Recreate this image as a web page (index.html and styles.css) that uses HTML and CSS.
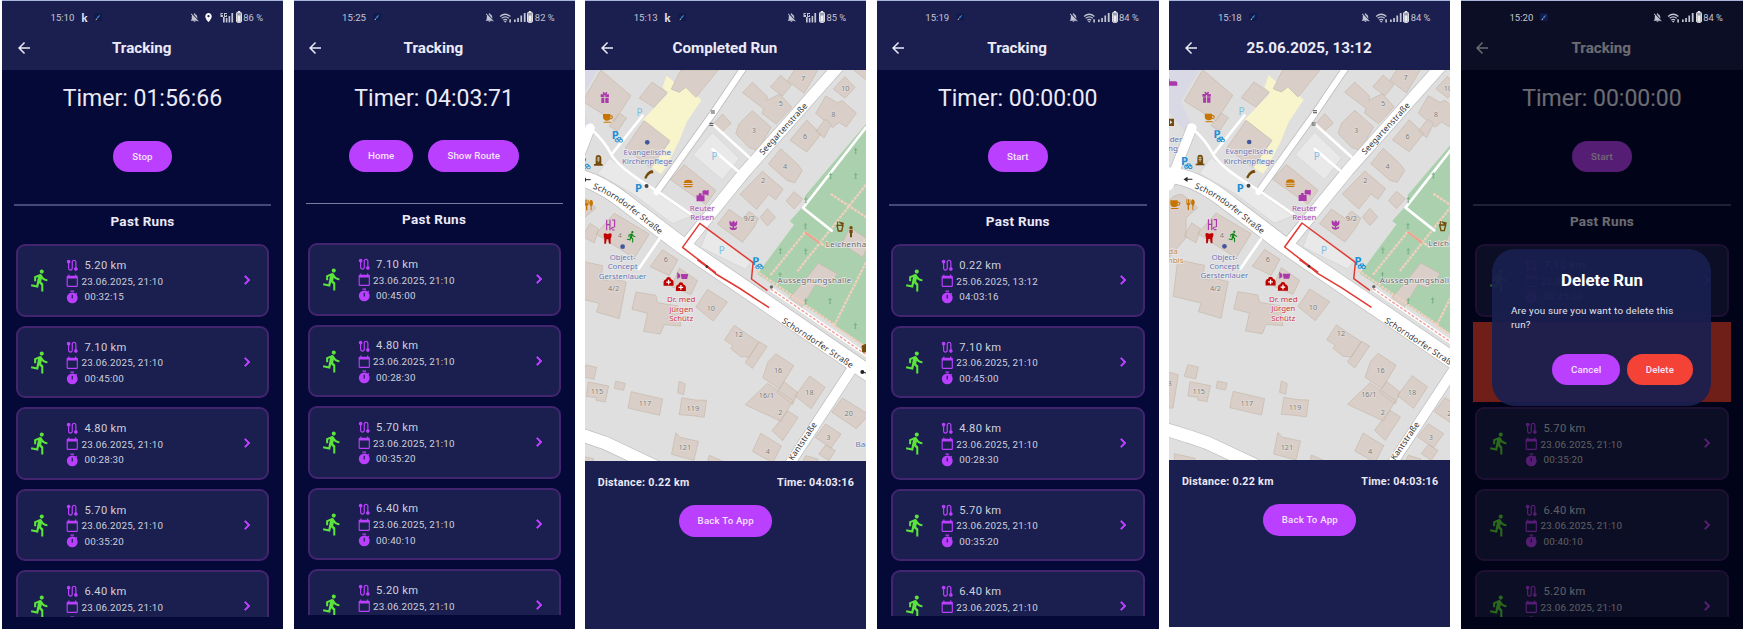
FILE: index.html
```html
<!DOCTYPE html>
<html lang="en">
<head>
<meta charset="utf-8">
<title>Run Tracking</title>
<link rel="stylesheet" href="styles.css">
</head>
<body>
<svg class="defs" aria-hidden="true">
<defs>
<symbol id="run" viewBox="0 0 24 24"><path d="M13.49 5.48c1.1 0 2-.9 2-2s-.9-2-2-2-2 .9-2 2 .9 2 2 2zm-3.6 13.9l1-4.4 2.1 2v6h2v-7.5l-2.1-2 .6-3c1.3 1.5 3.3 2.5 5.5 2.5v-2c-1.9 0-3.5-1-4.3-2.4l-1-1.6c-.4-.6-1-1-1.7-1-.3 0-.5.1-.8.1l-5.2 2.2v4.7h2v-3.4l1.8-.7-1.6 8.1-4.9-1-.4 2 7 1.4z"/></symbol>
<symbol id="route" viewBox="0 0 24 24"><path d="M19 15.18V7c0-2.21-1.79-4-4-4s-4 1.79-4 4v10c0 1.1-.9 2-2 2s-2-.9-2-2V8.82C8.16 8.4 9 7.3 9 6c0-1.66-1.34-3-3-3S3 4.34 3 6c0 1.3.84 2.4 2 2.82V17c0 2.21 1.79 4 4 4s4-1.79 4-4V7c0-1.1.9-2 2-2s2 .9 2 2v8.18c-1.16.41-2 1.51-2 2.82 0 1.66 1.34 3 3 3s3-1.34 3-3c0-1.3-.84-2.4-2-2.82z"/></symbol>
<symbol id="cal" viewBox="0 0 24 24"><path d="M20 3h-1V1h-2v2H7V1H5v2H4c-1.1 0-2 .9-2 2v16c0 1.1.9 2 2 2h16c1.1 0 2-.9 2-2V5c0-1.1-.9-2-2-2zm0 18H4V8h16v13z"/></symbol>
<symbol id="watch" viewBox="0 0 24 24"><path d="M15 1H9v2h6V1zm4.03 6.39l1.42-1.42c-.43-.51-.9-.99-1.41-1.41l-1.42 1.42A8.96 8.96 0 0 0 12 4a9 9 0 1 0 9 9c0-2.12-.74-4.07-1.97-5.61zM13 14h-2V8h2v6z"/></symbol>
<symbol id="chev" viewBox="0 0 24 24"><path d="M10 6 8.59 7.41 13.17 12l-4.58 4.59L10 18l6-6z" stroke="currentColor"/></symbol>
<symbol id="back" viewBox="0 0 24 24"><path d="M20 11H7.83l5.59-5.59L12 4l-8 8 8 8 1.41-1.41L7.83 13H20v-2z"/></symbol>
<symbol id="mute" viewBox="0 0 24 24"><path d="M20 18.69L7.84 6.14 5.27 3.49 4 4.76l2.8 2.8v.01c-.52.99-.8 2.16-.8 3.42v5l-2 2v1h13.73l2 2L21 19.72l-1-1.03zM12 22c1.11 0 2-.89 2-2h-4c0 1.11.89 2 2 2zm6-7.32V11c0-3.08-1.64-5.64-4.5-6.32V4c0-.83-.67-1.5-1.5-1.5s-1.5.67-1.5 1.5v.68c-.15.03-.29.08-.42.12z"/></symbol>
<symbol id="pin" viewBox="0 0 24 24"><path d="M12 2C8.13 2 5 5.13 5 9c0 5.25 7 13 7 13s7-7.75 7-13c0-3.87-3.13-7-7-7zm0 9.5a2.5 2.5 0 1 1 0-5 2.5 2.5 0 0 1 0 5z"/></symbol>
<symbol id="wifi" viewBox="0 0 24 20"><path d="M2 8Q11.500 0 21 8M5 11.500Q11.500 6 18 11.500M8 15Q11.500 12 15 15" fill="none" stroke="currentColor" stroke-width="2.300"/><path d="M11.500 19.500 9 16.500h5zM19 13h3v6h-3z"/></symbol>
<symbol id="signal" viewBox="0 0 12 10"><path d="M0 7.500h1.700V10H0zM3.200 6h1.700v4H3.200zM6.400 3.500h1.700V10H6.400zM9.800 1h1.800v9H9.800z"/></symbol>
<symbol id="cell" viewBox="0 0 15 11"><path d="M4 5h1.700v5.500H4zM6.800 6h1.600v4.500H6.800zM9.600 4h1.600v6.500H9.600zM12.400 1h1.700v9.500h-1.700zM1.500 1h2.400v1H2.500v1h1.500v2H1.500zM5 1h3v1H6v2h1V3h1v2H5z"/></symbol>
<symbol id="batt" viewBox="0 0 6 12"><path d="M2 0h2v1H2z"/><rect x=".6" y="1.300" width="4.800" height="10" rx="1" fill="#9b9dae" stroke="currentColor"/><path d="M1.600 4.500h2.800v6H1.600z"/></symbol>
<symbol id="app" viewBox="0 0 10 10"><rect width="10" height="10" rx="2" fill="#101b4b"/><path d="M2 8.500 5 4l3-2-2 3.500z" fill="#3f7fd0"/><path d="M2.500 7 4 8.500 2 9z" fill="#d9c58a"/></symbol>
<symbol id="bikepark" viewBox="0 0 36 36"><text x="0" y="24" class="p-bold">P</text><path d="M11 29a5 5 0 1 0 10 0 5 5 0 1 0-10 0M23 30a5 5 0 1 0 10 0 5 5 0 1 0-10 0M16 29l3-8h8l2 8" fill="none" stroke="#1a8fd6" stroke-width="3"/></symbol>
<symbol id="cup" viewBox="0 0 34 30"><path d="M2 2h22v4q9-1 8 6t-9 6q-2 4-7 4h-6Q2 20 2 12zM24 9v6q5 0 5-3t-5-3zM4 25h22v3H4z" fill="#c77400"/></symbol>
<symbol id="cross" viewBox="0 0 14 20"><path d="M7 1v17M2 7h10M4 18h6" stroke="#79b184" stroke-width="3" fill="none"/></symbol>
<symbol id="medic" viewBox="0 0 36 32"><path d="M2 30V17q2-7 8-8 1-7 8-7t8 7q6 1 8 8v13z" fill="#bf0000"/><path d="M18 11v15M10.500 18.500h15" stroke="#fff" stroke-width="4"/></symbol>

<g id="town">
<rect x="-40" y="20" width="910" height="1190" fill="#dfdfdf"/>
<path d="M861 190 678 405l5 20-51 57 13 10-110 148 326 218z" fill="#aad0ae"/>
<path d="M-40 20H60L0 122l32 75-20 20-52-70z" fill="#d9d9e6"/>
<path d="M262 45l28 23-12 20 22 7 22-17 45 40-45 67-22 55-40 80-15 20-30-20 57-75-82-67 75-78-15-20z" fill="#f8f5cd"/>
<path d="M400 215l80 78-50 65-88-75zM385 508l135 92-22 26-133-66zM90 292l145 105 100 70-55 22-120-90-105-60z" fill="#e9e9e9" stroke="#d3d3d3" stroke-width="2"/>
<g class="bld">
<path d="M65 28 155 105 105 182 10 122zM218 65l46 30-40 45-44-28zM305 28h112l-67 82-30-30-20 15-24-10zM195 180l77 60-57 82-77-60zM120 158l22 14-27 40-25-16z"/>
<path d="M520 65l45 43-3 12 40-20 36 40-47 50-42-32 5-14-64-48zM605 44l32 30-27 32-36-27zM650 22h70l-45 76-50-38zM797 48l31 32-30 33-35-28zM815 20h60v50zM740 106l35 20 15-6 42 37-30 42-22-14-20 16-50-43z"/>
<path d="M683 178l43 42-43 54-50-35zM738 176l18 14-21 42-24-20zM520 150l56 50-40 70-26-9-40-42 10-30zM430 160l26 28-26 24-27-22zM605 264l50 46 15 20-23 36-22-6-57-50zM550 332l62 53-22 32-22-16-36 45-49-45zM645 393l26 22-26 30-24-24zM450 446l40 28 20-22 28 22-14 27-34 44-75-55zM565 444l24 26-24 26-22-26zM315 312l95 78-30 42-106-75z"/>
<path d="M105 458l105 62-45 72-115-72zM-36 420q30-30 50-10l36 32-35 30v60l-51 60zM32 488l26 17-13 42-36-20zM250 567l46 30-26 48-57-27zM-10 598l80 17-5 40 20 5v-10l56 14-21 110-68-20 8-26-83-20z"/>
<path d="M385 686l60 38-43 57-52-42zM170 694l60 10 5 22 60 10 10 60-50-4-12 28-50-8 12-54-47-12zM300 622l55 38-20 42-58-24zM465 794l74 50-28 46-26-2-30-24 6-10-25-16zM540 843l24 14-44 66-22-18zM590 879l54 36-43 70-50-34 16-48zM565 968l77 52-36 62-108-50zM615 963l40 32-14 36-48-36zM625 1050l32 20-46 70-32-30zM692 946l46 34-42 64-48-38zM790 1012l80 50-38 42-74-50zM740 1090l46 30-30 42-48-32zM740 1153l29 17-20 30-30-20zM545 1118l62 38-26 50-61-34z"/>
<path d="M-40 935l32 8-16 100h-16zM20 913l32 7-8 36-34-8zM27 964l61 12-10 48-28-5 1-8-30-4zM109 962l29 6-5 21-28-6zM156 993l94 22-9 49-95-22zM300 962l18 8-5 32-18-6zM308 1011l40 7 34 1-7 51-34-5-41-3zM290 1116l12 14 56 12-14 57-67-18zM390 1184l46 20h-50zM-20 1180l62 14v20h-62zM680 1185l36 10v20h-50z"/>
<path d="M718 608l58 32-37 42-30-10-42 70-39-26 50-58zM812 500l60 40-20 50-62-40z"/>
</g>
<g fill="none" stroke="#f2d0bd" stroke-width="7" stroke-dasharray="9 3">
<path d="M861 372 655 632M755 400l115 75M678 515l70 48M678 515l-105 130M861 605 765 795M530 630l240 165M765 795l96 65"/></g>
<g fill="none" stroke="#bdbdbd" stroke-linejoin="round">
<path d="M-40 345Q40 345 150 434L300 548 385 607 880 945" stroke-width="52"/><path d="M780 15 500 330 325 545" stroke-width="38"/><path d="M498 15 400 160 232 395" stroke-width="23"/><path d="M-36 375 32 203" stroke-width="33"/><path d="M822 920 625 1220" stroke-width="33"/><path d="M-45 1107 22 1128 80 1148 250 1228" stroke-width="42"/></g>
<g fill="none" stroke="#fff" stroke-linejoin="round" stroke-linecap="round">
<path d="M-40 345Q40 345 150 434L300 548 385 607 880 945" stroke-width="48"/><path d="M780 15 500 330 325 545" stroke-width="34"/><path d="M498 15 400 160 232 395" stroke-width="18"/><path d="M-36 375 32 203" stroke-width="29"/><path d="M822 920 625 1220" stroke-width="29"/><path d="M-45 1107 22 1128 80 1148 250 1228" stroke-width="38"/>
<path d="M35 205Q75 240 95 280T235 392L345 468M190 165 98 280M400 190 510 290M400 266 475 330M240 535 178 625M861 200 672 442 758 510" stroke-width="8"/></g>
<path d="M575 685 880 895" stroke="#fff" stroke-width="12"/><path d="M575 685 880 895" stroke="#f29a97" stroke-width="4" stroke-dasharray="9 5"/>
<path d="M678 515 722 547" stroke="#f0a08c" stroke-width="6"/>
<g><use href="#cross" x="823" y="260" width="14" height="20"/><use href="#cross" x="748" y="335" width="14" height="20"/><use href="#cross" x="823" y="335" width="14" height="20"/><use href="#cross" x="673" y="408" width="14" height="20"/><use href="#cross" x="672" y="486" width="14" height="20"/><use href="#cross" x="597" y="560" width="14" height="20"/><use href="#cross" x="673" y="562" width="14" height="20"/><use href="#cross" x="596" y="634" width="14" height="20"/><use href="#cross" x="673" y="712" width="14" height="20"/><use href="#cross" x="746" y="710" width="14" height="20"/><use href="#cross" x="822" y="785" width="14" height="20"/></g>

<g class="num">
<text x="672" y="60">7</text><text x="799" y="91">10</text><text x="605" y="137">5</text><text x="763" y="170">8</text><text x="524" y="218">3</text><text x="678" y="235">6</text><text x="618" y="325">4</text><text x="552" y="368">2</text><text x="510" y="482">9/2</text><text x="122" y="532">4</text><text x="260" y="604">6</text><text x="103" y="691">4/2</text><text x="395" y="750">10</text><text x="479" y="828">12</text><text x="597" y="938">16</text><text x="691" y="1004">18</text><text x="562" y="1011">16/1</text><text x="604" y="1063">2</text><text x="809" y="1067">20</text><text x="748" y="1138">3</text><text x="566" y="1181">4</text><text x="53" y="1001">115</text><text x="197" y="1037">117</text><text x="341" y="1050">119</text><text x="317" y="1168">121</text><text x="-34" y="976">3</text>
</g>
<g class="lbl blue"><text x="204" y="282" textLength="142">Evangelische</text><text x="204" y="310" textLength="152">Kirchenpflege</text><text x="130" y="599" textLength="78">Object-</text><text x="130" y="626" textLength="90">Concept</text><text x="130" y="654" textLength="143">Gerstenlauer</text><text x="-18" y="246">ider</text><text x="-24" y="273">ng</text><text x="850" y="1160">Bac</text></g>
<g class="lbl violet"><text x="369" y="451" textLength="74">Reuter</text><text x="369" y="479" textLength="72">Reisen</text></g>
<g class="lbl red"><text x="306" y="725" textLength="86">Dr. med</text><text x="306" y="753" textLength="72">Jürgen</text><text x="306" y="781" textLength="72">Schütz</text></g>
<g class="lbl orange"><text x="-24" y="582">da</text><text x="-20" y="609">mbis</text></g>
<g class="lbl grey"><text x="706" y="668" textLength="222">Aussegnungshalle</text><text x="801" y="558" textLength="121">Leichenha</text></g>
<g class="street"><text textLength="200" transform="translate(613 205) rotate(-47.500)" y="8">Seegartenstraße</text>
<path id="bend" d="M38 382Q95 405 142 442T250 528" fill="none" stroke="none"/>
<text class="start"><textPath href="#bend" startOffset="2" textLength="246">Schorndorfer Straße</textPath></text>
<text textLength="250" transform="translate(716 847) rotate(33.500)" y="8">Schorndorfer Straße</text>
<text textLength="132" transform="translate(671 1142) rotate(-56)" y="8">Kantstraße</text></g>

<g class="p-thin"><text x="172" y="165">P</text><text x="397" y="299">P</text><text x="419" y="580">P</text></g>
<text x="167" y="395" class="p-bold">P</text>
<use href="#bikepark" x="97" y="210" width="36" height="36"/><use href="#bikepark" x="0" y="290" width="36" height="36"/><use href="#bikepark" x="519" y="590" width="36" height="36"/>
<use href="#cup" x="69" y="158" width="34" height="30"/><use href="#cup" x="-34" y="418" width="34" height="30"/>
<path d="M16 417v12q0 5 4 6v14h4v-14q4-1 4-6v-12h-2v11h-2v-11h-3v11h-2v-11zM34 449v-13q-4-3-4-10t5-9q6 2 6 9t-4 10v13z" fill="#c77400"/>
<path d="M64 101h9q-6-7 0-7 3 0 4 5 1-5 4-5 6 0 0 7h8v8H78v-5h-3v5H64zM66 111h9v16h-9zM78 111h10v16H78z" fill="#ac39ac"/>
<path d="M-38 56h4v7h18q5 0 5 5v8h-27z" fill="#ac39ac"/>
<path d="M-37 175h16v22h-16zM-33 180v12l7-6z" fill="#734a08"/>
<path d="M49 310V292q0-9 8-9t9 9v18h4v5H44v-5z" fill="#734a08"/><path d="M52 292h10M52 298h10M57 288v17" stroke="#dfdfdf" stroke-width="2"/>
<path d="M196 349q-2 5 4 5 5-1 4-6 7-9 13-10 4 1 6-3l-4-7q-15 3-23 21z" fill="#734a08"/>
<path d="M314 367q0-10 13-10t13 10zM313 370h28v3h-28zM314 376h26q0 4-4 4h-18q-4 0-4-4z" fill="#c77400"/>
<path d="M352 404h7v-6h8v6h9v18h-24z" fill="#ac39ac"/><path d="M371 391q2-3 8-1 5 2 8-1v12q-4 2-8 0-5-1-8 1zM386 389v17" fill="#ac39ac" stroke="#ac39ac" stroke-width="2"/>
<path d="M451 480q7 2 7 7 2-6 5-7 4 2 5 7 2-5 6-7v9q0 7-9 8v6l9-5q0 10-12 10-11 0-11-10l9 5v-6q-9-1-9-8z" fill="#ac39ac"/>
<path d="M82 477v32M92 477v32M82 492h10M98 478h8v22M96 506q0-6 8-6M98 508h8" fill="none" stroke="#ac39ac" stroke-width="3.500"/>
<path d="M73 522q0-4 5-4 7 4 14 0 5 0 5 4 0 7-3 11v16h-5l-2-13h-5l-2 13h-5v-16q-2-4-2-11z" fill="#bf0000"/>
<svg class="gym" x="138" y="509" width="38" height="38"><use href="#run"/></svg>
<circle cx="204" cy="245" r="7" fill="#42569c"/><circle cx="130" cy="558" r="7" fill="#42569c"/>
<use href="#medic" x="251" y="647" width="34" height="30"/><use href="#medic" x="288" y="663" width="34" height="30"/>
<path d="M294 634l9 8v8l-9 5zM305 640h22l-3 15h-17z" fill="#ac39ac"/>
<g stroke="#444" stroke-width="3"><path d="M395 151h12M395 157h12M391 188h12M391 194h12"/></g>
<circle cx="202" cy="376" r="6" fill="#444"/><circle cx="577" cy="679" r="5" fill="#666"/>
<path d="M10 357h24M10 357l8-5v10zM861 937l-15-4" stroke="#222" stroke-width="3"/><circle cx="850" cy="934" r="6" fill="#222"/>
<path d="M774 494h18l-4 17h-10z" fill="none" stroke="#734a08" stroke-width="4"/><path d="M780 484l14 4-5 6M776 482v12M849 856l14-6v24h-12z" fill="#734a08" stroke="#734a08" stroke-width="3"/><circle cx="816" cy="501" r="5" fill="#734a08"/><path d="M811 507h10v10h-2v13h-6v-13h-2z" fill="#734a08"/>
<path d="M570 741 480 682 410 640 385 618 310 560 362 488 522 606 517 655 565 690" fill="none" stroke="#e03a35" stroke-width="4.500" stroke-linejoin="round"/><path d="M355 597 410 637" stroke="#e03a35" stroke-width="6"/><circle cx="383" cy="618" r="4" fill="#333"/>
</g>
</defs>
</svg>

<main class="board">

<section class="phone">
<div class="status"><span class="clock">15:10</span><b class="k">k</b><svg class="app"><use href="#app"/></svg><span class="sys"><svg class="mute"><use href="#mute"/></svg><svg class="pin"><use href="#pin"/></svg><svg class="cell"><use href="#cell"/></svg><svg class="batt"><use href="#batt"/></svg>86 %</span></div>
<header class="bar"><svg class="back"><use href="#back"/></svg><h1>Tracking</h1></header>
<div class="body">
<p class="timer">Timer: 01:56:66</p>
<div class="actions"><button class="btn wide">Stop</button></div>
<h2>Past Runs</h2>
<ul class="runs">
<li><svg class="runner"><use href="#run"/></svg><div class="facts"><p class="km"><svg><use href="#route"/></svg>5.20 km</p><p class="date"><svg><use href="#cal"/></svg>23.06.2025, 21:10</p><p><svg><use href="#watch"/></svg>00:32:15</p></div><svg class="chev"><use href="#chev"/></svg></li>
<li><svg class="runner"><use href="#run"/></svg><div class="facts"><p class="km"><svg><use href="#route"/></svg>7.10 km</p><p class="date"><svg><use href="#cal"/></svg>23.06.2025, 21:10</p><p><svg><use href="#watch"/></svg>00:45:00</p></div><svg class="chev"><use href="#chev"/></svg></li>
<li><svg class="runner"><use href="#run"/></svg><div class="facts"><p class="km"><svg><use href="#route"/></svg>4.80 km</p><p class="date"><svg><use href="#cal"/></svg>23.06.2025, 21:10</p><p><svg><use href="#watch"/></svg>00:28:30</p></div><svg class="chev"><use href="#chev"/></svg></li>
<li><svg class="runner"><use href="#run"/></svg><div class="facts"><p class="km"><svg><use href="#route"/></svg>5.70 km</p><p class="date"><svg><use href="#cal"/></svg>23.06.2025, 21:10</p><p><svg><use href="#watch"/></svg>00:35:20</p></div><svg class="chev"><use href="#chev"/></svg></li>
<li><svg class="runner"><use href="#run"/></svg><div class="facts"><p class="km"><svg><use href="#route"/></svg>6.40 km</p><p class="date"><svg><use href="#cal"/></svg>23.06.2025, 21:10</p><p><svg><use href="#watch"/></svg></p></div><svg class="chev"><use href="#chev"/></svg></li>
</ul>
</div>
</section>

<section class="phone tight">
<div class="status"><span class="clock">15:25</span><svg class="app"><use href="#app"/></svg><span class="sys"><svg class="mute"><use href="#mute"/></svg><svg class="wifi"><use href="#wifi"/></svg><svg class="signal"><use href="#signal"/></svg><svg class="batt"><use href="#batt"/></svg>82 %</span></div>
<header class="bar"><svg class="back"><use href="#back"/></svg><h1>Tracking</h1></header>
<div class="body">
<p class="timer">Timer: 04:03:71</p>
<div class="actions"><button class="btn">Home</button><button class="btn">Show Route</button></div>
<h2>Past Runs</h2>
<ul class="runs">
<li><svg class="runner"><use href="#run"/></svg><div class="facts"><p class="km"><svg><use href="#route"/></svg>7.10 km</p><p class="date"><svg><use href="#cal"/></svg>23.06.2025, 21:10</p><p><svg><use href="#watch"/></svg>00:45:00</p></div><svg class="chev"><use href="#chev"/></svg></li>
<li><svg class="runner"><use href="#run"/></svg><div class="facts"><p class="km"><svg><use href="#route"/></svg>4.80 km</p><p class="date"><svg><use href="#cal"/></svg>23.06.2025, 21:10</p><p><svg><use href="#watch"/></svg>00:28:30</p></div><svg class="chev"><use href="#chev"/></svg></li>
<li><svg class="runner"><use href="#run"/></svg><div class="facts"><p class="km"><svg><use href="#route"/></svg>5.70 km</p><p class="date"><svg><use href="#cal"/></svg>23.06.2025, 21:10</p><p><svg><use href="#watch"/></svg>00:35:20</p></div><svg class="chev"><use href="#chev"/></svg></li>
<li><svg class="runner"><use href="#run"/></svg><div class="facts"><p class="km"><svg><use href="#route"/></svg>6.40 km</p><p class="date"><svg><use href="#cal"/></svg>23.06.2025, 21:10</p><p><svg><use href="#watch"/></svg>00:40:10</p></div><svg class="chev"><use href="#chev"/></svg></li>
<li><svg class="runner"><use href="#run"/></svg><div class="facts"><p class="km"><svg><use href="#route"/></svg>5.20 km</p><p class="date"><svg><use href="#cal"/></svg>23.06.2025, 21:10</p><p><svg><use href="#watch"/></svg></p></div><svg class="chev"><use href="#chev"/></svg></li>
</ul>
</div>
</section>

<section class="phone result">
<div class="status"><span class="clock">15:13</span><b class="k">k</b><svg class="app"><use href="#app"/></svg><span class="sys"><svg class="mute"><use href="#mute"/></svg><svg class="cell"><use href="#cell"/></svg><svg class="batt"><use href="#batt"/></svg>85 %</span></div>
<header class="bar"><svg class="back"><use href="#back"/></svg><h1>Completed Run</h1></header>
<svg class="map" viewBox="17 28 844 1173" preserveAspectRatio="none"><use href="#town"/></svg>
<div class="totals"><span>Distance: 0.22 km</span><span>Time: 04:03:16</span></div>
<button class="btn">Back To App</button>
</section>

<section class="phone">
<div class="status"><span class="clock">15:19</span><svg class="app"><use href="#app"/></svg><span class="sys"><svg class="mute"><use href="#mute"/></svg><svg class="wifi"><use href="#wifi"/></svg><svg class="signal"><use href="#signal"/></svg><svg class="batt"><use href="#batt"/></svg>84 %</span></div>
<header class="bar"><svg class="back"><use href="#back"/></svg><h1>Tracking</h1></header>
<div class="body">
<p class="timer">Timer: 00:00:00</p>
<div class="actions"><button class="btn wide">Start</button></div>
<h2>Past Runs</h2>
<ul class="runs short">
<li><svg class="runner"><use href="#run"/></svg><div class="facts"><p class="km"><svg><use href="#route"/></svg>0.22 km</p><p class="date"><svg><use href="#cal"/></svg>25.06.2025, 13:12</p><p><svg><use href="#watch"/></svg>04:03:16</p></div><svg class="chev"><use href="#chev"/></svg></li>
<li><svg class="runner"><use href="#run"/></svg><div class="facts"><p class="km"><svg><use href="#route"/></svg>7.10 km</p><p class="date"><svg><use href="#cal"/></svg>23.06.2025, 21:10</p><p><svg><use href="#watch"/></svg>00:45:00</p></div><svg class="chev"><use href="#chev"/></svg></li>
<li><svg class="runner"><use href="#run"/></svg><div class="facts"><p class="km"><svg><use href="#route"/></svg>4.80 km</p><p class="date"><svg><use href="#cal"/></svg>23.06.2025, 21:10</p><p><svg><use href="#watch"/></svg>00:28:30</p></div><svg class="chev"><use href="#chev"/></svg></li>
<li><svg class="runner"><use href="#run"/></svg><div class="facts"><p class="km"><svg><use href="#route"/></svg>5.70 km</p><p class="date"><svg><use href="#cal"/></svg>23.06.2025, 21:10</p><p><svg><use href="#watch"/></svg>00:35:20</p></div><svg class="chev"><use href="#chev"/></svg></li>
<li><svg class="runner"><use href="#run"/></svg><div class="facts"><p class="km"><svg><use href="#route"/></svg>6.40 km</p><p class="date"><svg><use href="#cal"/></svg>23.06.2025, 21:10</p><p><svg><use href="#watch"/></svg></p></div><svg class="chev"><use href="#chev"/></svg></li>
</ul>
</div>
</section>

<section class="phone result past">
<div class="status"><span class="clock">15:18</span><svg class="app"><use href="#app"/></svg><span class="sys"><svg class="mute"><use href="#mute"/></svg><svg class="wifi"><use href="#wifi"/></svg><svg class="signal"><use href="#signal"/></svg><svg class="batt"><use href="#batt"/></svg>84 %</span></div>
<header class="bar"><svg class="back"><use href="#back"/></svg><h1>25.06.2025, 13:12</h1></header>
<svg class="map" viewBox="-36 29 841 1170" preserveAspectRatio="none"><use href="#town"/></svg>
<div class="totals"><span>Distance: 0.22 km</span><span>Time: 04:03:16</span></div>
<button class="btn">Back To App</button>
</section>

<section class="phone">
<div class="status above"><span class="clock">15:20</span><svg class="app"><use href="#app"/></svg><span class="sys"><svg class="mute"><use href="#mute"/></svg><svg class="wifi"><use href="#wifi"/></svg><svg class="signal"><use href="#signal"/></svg><svg class="batt"><use href="#batt"/></svg>84 %</span></div>
<header class="bar"><svg class="back"><use href="#back"/></svg><h1>Tracking</h1></header>
<div class="body">
<p class="timer">Timer: 00:00:00</p>
<div class="actions"><button class="btn wide">Start</button></div>
<h2>Past Runs</h2>
<ul class="runs">
<li><svg class="runner"><use href="#run"/></svg><div class="facts"><p class="km"><svg><use href="#route"/></svg>7.10 km</p><p class="date"><svg><use href="#cal"/></svg>23.06.2025, 21:10</p><p><svg><use href="#watch"/></svg>00:45:00</p></div><svg class="chev"><use href="#chev"/></svg></li>
<li class="removing"></li>
<li><svg class="runner"><use href="#run"/></svg><div class="facts"><p class="km"><svg><use href="#route"/></svg>5.70 km</p><p class="date"><svg><use href="#cal"/></svg>23.06.2025, 21:10</p><p><svg><use href="#watch"/></svg>00:35:20</p></div><svg class="chev"><use href="#chev"/></svg></li>
<li><svg class="runner"><use href="#run"/></svg><div class="facts"><p class="km"><svg><use href="#route"/></svg>6.40 km</p><p class="date"><svg><use href="#cal"/></svg>23.06.2025, 21:10</p><p><svg><use href="#watch"/></svg>00:40:10</p></div><svg class="chev"><use href="#chev"/></svg></li>
<li><svg class="runner"><use href="#run"/></svg><div class="facts"><p class="km"><svg><use href="#route"/></svg>5.20 km</p><p class="date"><svg><use href="#cal"/></svg>23.06.2025, 21:10</p><p><svg><use href="#watch"/></svg></p></div><svg class="chev"><use href="#chev"/></svg></li>
</ul>
</div>
<div class="scrim"></div>
<div class="dialog"><h3>Delete Run</h3><p>Are you sure you want to delete this run?</p><div class="choices"><button class="btn">Cancel</button><button class="btn danger">Delete</button></div></div>
</section>

</main>
</body>
</html>
```

FILE: styles.css
```css
* { box-sizing: border-box; margin: 0; padding: 0; }
body { background: #fff; font-family: Roboto, sans-serif; overflow: hidden; }
.defs { position: absolute; width: 0; height: 0; }
svg { fill: currentColor; flex: none; }
.board {
  display: grid;
  grid-template-columns: 281px 281px 281px 282px 281px 282px;
  justify-content: space-between;
  height: 629px;
  padding-left: 2px;
}
.phone {
  position: relative;
  display: flex;
  flex-direction: column;
  height: 629px;
  overflow: hidden;
  background: #040938;
  border-top: 1px solid #a9b6dc;
  color: #eceaf6;
}
.result { background: #1a1f50; align-items: center; }
.past { height: 627px; }

.status {
  display: flex;
  align-items: center;
  align-self: stretch;
  height: 32px;
  padding: 0 20px 0 48.500px;
  background: #1a1f50;
  color: #c3c4d1;
  font-size: 9.600px;
}
.above { position: relative; z-index: 3; background: #0c0e25; }
.k { margin-left: 7px; font: 900 11px Lato, sans-serif; color: #e4e4ee; }
.app { width: 8px; height: 8px; margin-left: 7px; }
.sys { display: flex; align-items: center; margin-left: auto; font-size: 9.400px; }
.mute { width: 11px; height: 11px; }
.pin { width: 11px; height: 11px; margin-left: 3px; color: #fff; }
.wifi { width: 13px; height: 11px; margin-left: 4px; }
.signal { width: 12px; height: 10px; margin-left: 2px; }
.cell { width: 15px; height: 11px; margin-left: 5px; }
.batt { width: 6px; height: 12px; margin: 0 1.500px 0 1.500px; color: #eee; }

.bar {
  display: flex;
  align-items: center;
  align-self: stretch;
  height: 36.500px;
  padding: 0 37px 6.500px 12.500px;
  background: #1a1f50;
}
.back { width: 18px; height: 18px; }
h1 { flex: 1; text-align: center; font-size: 15.200px; font-weight: 700; padding-left: 5px; line-height: 20px; }

.body { flex: 1; padding: 15px 12px 0; }
.timer { text-align: center; font-size: 23px; line-height: 28px; }
.actions { display: flex; justify-content: center; gap: 15px; margin-top: 28px; }
.btn {
  height: 31.500px;
  padding: 0 19px;
  border: 0;
  border-radius: 16px;
  background: #bb3fff;
  color: #f3e3fb;
  font: 500 9.700px/31px Roboto, sans-serif;
  letter-spacing: .1px;
  white-space: nowrap;
}
.wide { min-width: 59px; }
h2 {
  margin-top: 31.500px;
  padding-top: 6.500px;
  border-top: 2px solid #45497a;
  text-align: center;
  font-size: 13.500px;
  line-height: 18px;
  letter-spacing: .3px;
}
.runs { display: grid; grid-auto-rows: 72.500px; gap: 9px; height: 373px; margin-top: 14.200px; padding: 0 2px; overflow: hidden; list-style: none; }
.runs.short { height: 372px; }
.runs li {
  display: flex;
  align-items: center;
  padding: 0 11px 0 10px;
  border: 2px solid #42246f;
  border-radius: 9px;
  background: #1a1f50;
  color: #cfcfdc;
}
.runs .removing { margin: -4px -2px; border: 0; border-radius: 0; background: #f44336; }
.runner { width: 24.500px; height: 24.500px; color: #5ce33c; }
.facts { flex: 1; padding: 1.500px 0 0 12.500px; }
.facts p { display: flex; align-items: center; gap: 5px; height: 15.600px; font-size: 9.800px; letter-spacing: .22px; }
.facts .km { font-size: 11.200px; letter-spacing: .3px; }
.facts .date { gap: 2px; }
.facts svg { width: 14.500px; height: 14.500px; color: #bb3fff; }
.facts .date svg { width: 14.500px; height: 13.500px; }
.chev { width: 18px; height: 18px; color: #bb3fff; }

.tight .actions { margin-top: 27.500px; }
.tight h2 { margin-top: 31px; border-top-width: 1px; border-color: #7a7ca0; }
.tight .runs { height: 371.500px; margin-top: 15px; }

.map { width: 100%; height: 391px; }
.past .map { height: 390px; }
.totals { display: flex; justify-content: space-between; align-self: stretch; padding: 14px 12px 0 12.500px; font-size: 10.700px; font-weight: 700; line-height: 15px; letter-spacing: .3px; }
.result > .btn { margin-top: 15.500px; padding: 0 18.500px; letter-spacing: .2px; }

.bld { fill: #d9cfc8; stroke: #c6b8ab; stroke-width: 2; }
.num, .lbl, .street { font-family: "Noto Sans", sans-serif; text-anchor: middle; paint-order: stroke; }
.num { font-size: 22px; fill: #777; stroke: #e8e2dd; stroke-width: 3; }
.lbl { font-size: 24px; stroke: #eceaea; stroke-width: 4; }
.blue { fill: #6478b8; }
.violet { fill: #a84bb0; }
.red { fill: #cc3340; }
.orange { fill: #c98a3c; }
.grey { fill: #666; }
.gym { fill: #0d8517; }
.street { font-size: 25px; fill: #333; stroke: #fff; stroke-width: 4; }
.start { text-anchor: start; }
.p-bold { font: 700 34px "Noto Sans", sans-serif; fill: #1a8fd6; }
.p-thin { font: 400 30px "Noto Sans", sans-serif; fill: #7cc0e4; }

.scrim { position: absolute; inset: 0; background: rgba(0, 0, 0, .54); }
.dialog {
  position: absolute;
  left: 31px;
  top: 248px;
  width: 219px;
  height: 157px;
  padding: 20px 18px 0 19px;
  border-radius: 23px;
  background: rgba(26, 31, 80, .93);
  color: #e4e4ef;
}
.dialog h3 { text-align: center; font-size: 16.800px; line-height: 22px; color: #fff; }
.dialog p { margin-top: 13px; font-size: 9.800px; line-height: 14px; letter-spacing: .22px; }
.choices { display: flex; justify-content: flex-end; gap: 6.500px; margin-top: 21.500px; }
.danger { background: #f44336; }
```
